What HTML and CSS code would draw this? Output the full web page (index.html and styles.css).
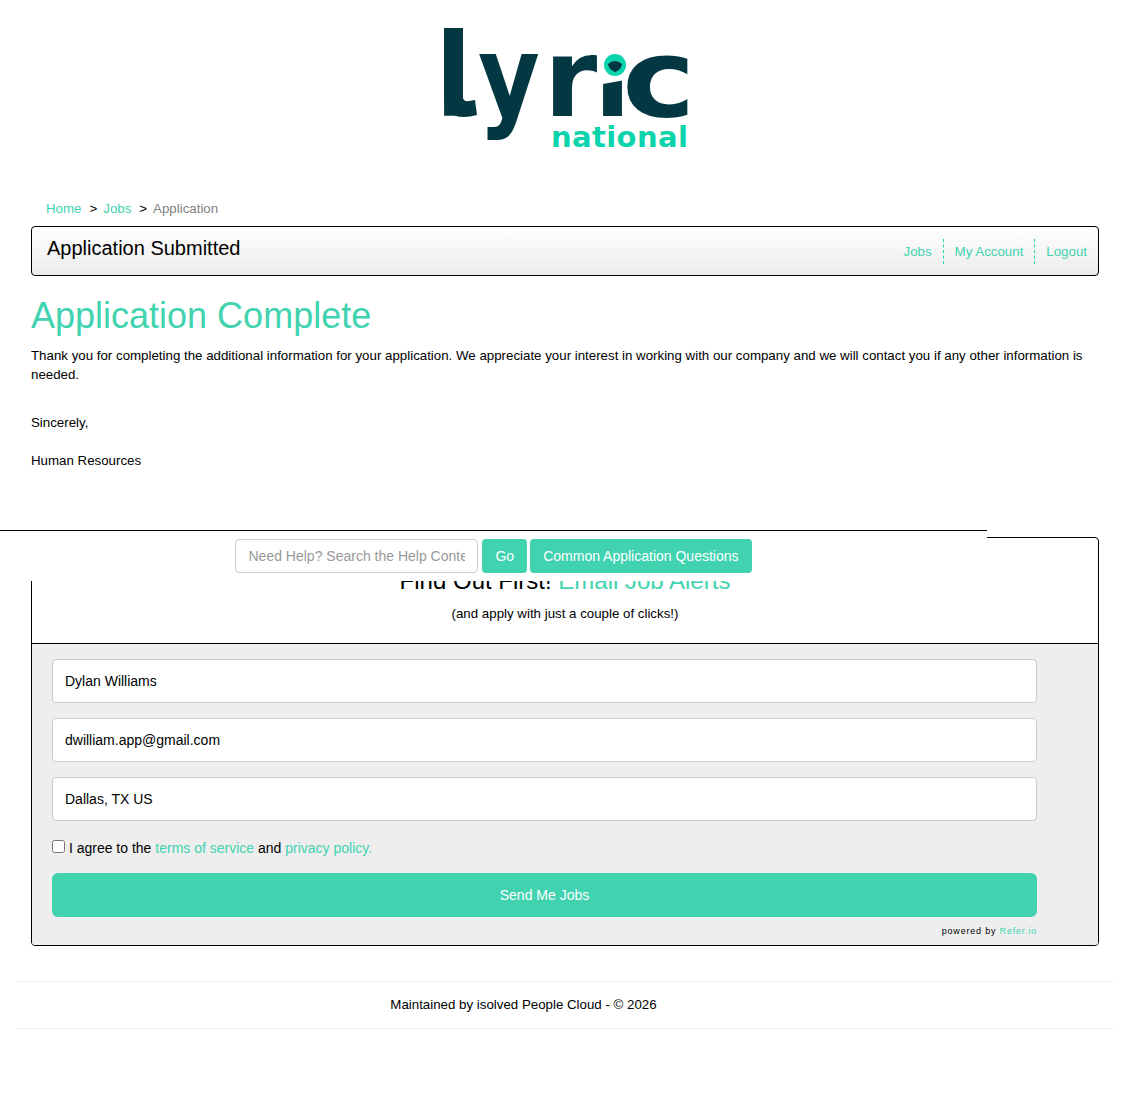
FILE: index.html
```html
<!DOCTYPE html>
<html lang="en">
<head>
    <meta charset="UTF-8" />
    <title>Application Complete</title>
    <link rel="stylesheet" href="styles.css">
</head>

<body>
    <header class="logo-wrap">
        <svg class="logo" width="290" height="150" viewBox="0 0 290 150" role="img" aria-label="lyric national">
            <text class="logo-main" x="15" y="101">l</text>
            <text class="logo-main" transform="translate(58 101) scale(.88 1.04)">y</text>
            <text class="logo-main" x="124" y="101">r</text>
            <text class="logo-main" x="174" y="101">ı</text>
            <text class="logo-main" transform="translate(202 101) scale(1.15 1)">c</text>
            <path class="logo-tail" d="M24 13 H43 V82 Q43 87 49 86 L55 85 L57 100 Q50 102 44 102 Q24 102 24 82 Z" />
            <path class="logo-gap" d="M181 38 H205 V65 L183 69 H181 Z" />
            <circle class="logo-dot" cx="195" cy="50" r="11" />
            <path class="logo-dot-cut" d="M188 49 Q195 43 202 49 Q201 55 195 57 Q189 55 188 49 Z" />
            <text class="logo-sub" x="131" y="132">national</text>
        </svg>
    </header>

    <nav class="crumbs">
        <a href="#">Home</a><span class="sep">&gt;</span><a href="#">Jobs</a><span class="sep">&gt;</span><span class="current">Application</span>
    </nav>

    <div class="title-bar">
        <h2>Application Submitted</h2>
        <ul class="title-nav">
            <li><a href="#">Jobs</a></li>
            <li><a href="#">My Account</a></li>
            <li><a href="#">Logout</a></li>
        </ul>
    </div>

    <main class="content">
        <h1>Application Complete</h1>
        <p class="thanks">Thank you for completing the additional information for your application. We appreciate your interest in working with our company and we will contact you if any other information is needed.</p>
        <p class="sign">Sincerely,</p>
        <p class="sign-name">Human Resources</p>
    </main>

    <div class="help-bar">
        <input class="help-input" type="text" placeholder="Need Help? Search the Help Content" />
        <button class="btn">Go</button>
        <button class="btn">Common Application Questions</button>
    </div>

    <section class="alerts">
        <div class="alerts-head">
            <h3>Find Out First! <a href="#">Email Job Alerts</a></h3>
            <p>(and apply with just a couple of clicks!)</p>
        </div>
        <form class="alerts-form">
            <input class="field" type="text" value="Dylan Williams" />
            <input class="field" type="text" value="dwilliam.app@gmail.com" />
            <input class="field" type="text" value="Dallas, TX US" />
            <label class="agree"><input type="checkbox" /> I agree to the <a href="#">terms of service</a> and <a href="#">privacy policy.</a></label>
            <button class="send" type="button">Send Me Jobs</button>
            <div class="powered">powered by <a href="#">Refer.io</a></div>
        </form>
    </section>

    <footer class="page-foot">Maintained by isolved People Cloud - © 2026</footer>
</body>

</html>
```

FILE: styles.css
```css
* {
    box-sizing: border-box;
}

html,
body {
    margin: 0;
    height: 1108px;
    overflow: hidden;
}

body {
    position: relative;
    font-family: "Liberation Sans", Arial, sans-serif;
    font-size: 13.3px;
    color: #000;
    background: #fff;
}

a {
    color: #41d3b0;
    text-decoration: none;
}

.logo-wrap {
    height: 165px;
    padding-top: 15px;
    display: flex;
    justify-content: center;
}

.logo {
    display: block;
}

.logo-main {
    font-family: "DejaVu Sans", sans-serif;
    font-weight: 700;
    font-size: 108px;
    fill: #033843;
}

.logo-tail {
    fill: #033843;
}

.logo-gap {
    fill: #fff;
}

.logo-dot {
    fill: #0bd3ac;
}

.logo-dot-cut {
    fill: #033843;
}

.logo-sub {
    font-family: "DejaVu Sans", sans-serif;
    font-weight: 700;
    font-size: 29px;
    letter-spacing: 0.4px;
    fill: #0bd3ac;
}

.crumbs {
    height: 61px;
    padding: 36px 0 0 46px;
    line-height: 16px;
}

.crumbs .sep {
    margin: 0 6px 0 8px;
}

.crumbs .current {
    color: #808080;
}

.title-bar {
    margin: 0 31px;
    height: 50px;
    border: 1px solid #000;
    border-radius: 4px;
    background: linear-gradient(#fff, #ececec);
    display: flex;
    justify-content: space-between;
    padding: 0 0 0 15px;
}

.title-bar h2 {
    margin: 9px 0 0;
    font-size: 20px;
    font-weight: 400;
    line-height: 24px;
}

.title-nav {
    list-style: none;
    margin: 12px 0 0;
    padding: 0;
    display: flex;
    height: 25px;
}

.title-nav li {
    padding: 0 11px;
    line-height: 25px;
    border-left: 1px dashed #22d6b0;
}

.title-nav li:first-child {
    border-left: none;
}

.content {
    padding: 0 31px;
    height: 261px;
}

.content h1 {
    margin: 0;
    padding-top: 19px;
    font-size: 36px;
    font-weight: 400;
    line-height: 42px;
    color: #41d3b0;
}

.thanks {
    margin: 9px 0 0;
    line-height: 19px;
}

.sign {
    margin: 29px 0 0;
    line-height: 19px;
}

.sign-name {
    margin: 19px 0 0;
    line-height: 19px;
}

/* sits over the top of the alerts panel */
.help-bar {
    position: absolute;
    top: 530px;
    left: 0;
    width: 987px;
    height: 51px;
    background: #fff;
    border-top: 1px solid #000;
    padding-top: 8px;
    display: flex;
    justify-content: center;
    align-items: flex-start;
}

.help-input {
    width: 243px;
    height: 34px;
    padding: 6px 12px;
    border: 1px solid #ccc;
    border-radius: 4px;
    font: 14px "Liberation Sans", Arial, sans-serif;
    margin-right: 4px;
}

.help-input::placeholder {
    color: #999;
}

.btn {
    height: 34px;
    padding: 0 13px;
    border: none;
    border-radius: 4px;
    background: #41d3b0;
    color: #fff;
    font: 14px "Liberation Sans", Arial, sans-serif;
    margin-right: 3px;
}

.btn:last-child {
    margin-right: 0;
}

.alerts {
    margin: 0 31px;
    height: 409px;
    border: 1px solid #000;
    border-radius: 4px;
    overflow: hidden;
}

.alerts-head {
    height: 106px;
    border-bottom: 1px solid #000;
    text-align: center;
    padding-top: 29px;
}

.alerts-head h3 {
    margin: 0;
    font-size: 24px;
    font-weight: 400;
    line-height: 28px;
}

.alerts-head p {
    margin: 11px 0 0;
    line-height: 16px;
}

.alerts-form {
    background: #eee;
    height: 301px;
    padding: 15px 61px 0 20px;
    display: flex;
    flex-direction: column;
    font-size: 14px;
}

.field {
    height: 44px;
    margin-bottom: 15px;
    padding: 0 12px;
    border: 1px solid #ccc;
    border-radius: 4px;
    background: #fff;
    font: 14px "Liberation Sans", Arial, sans-serif;
    color: #000;
    flex: none;
}

.agree {
    line-height: 20px;
    margin-top: 2px;
}

.agree input {
    margin: 0;
    width: 13px;
    height: 13px;
}

.send {
    margin-top: 15px;
    height: 44px;
    border: none;
    border-radius: 6px;
    background: #41d3b0;
    color: #fff;
    font: 14px "Liberation Sans", Arial, sans-serif;
    flex: none;
}

.powered {
    margin-top: 9px;
    text-align: right;
    font-size: 9px;
    letter-spacing: 0.8px;
    line-height: 11px;
}

.page-foot {
    margin: 35px 16px 0;
    height: 48px;
    border-top: 1px solid #eee;
    border-bottom: 1px solid #eee;
    padding-right: 83px;
    text-align: center;
    line-height: 46px;
}
```
